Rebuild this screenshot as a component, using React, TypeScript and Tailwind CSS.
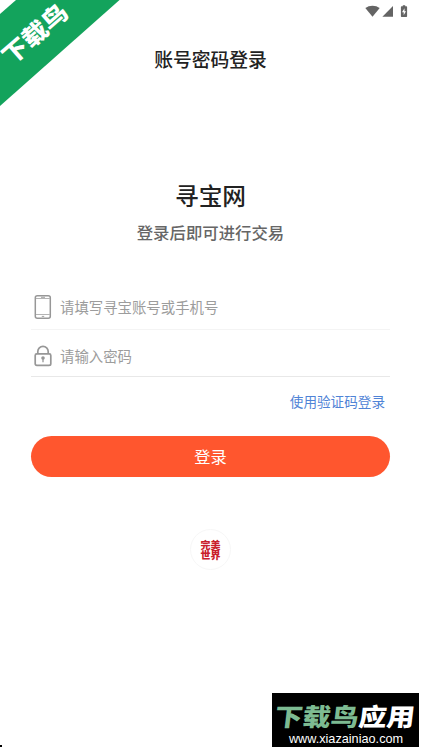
import {useState} from "react"

const PhoneIcon = () => (
  <svg width="18" height="26" viewBox="0 0 18 26" fill="none" stroke="#979797">
    <rect x="1.3" y="1.8" width="15" height="22.4" rx="2" strokeWidth="1.5" />
    <path d="M2 4.5h14M2 20.5h14" stroke="#b4b4b4" strokeWidth="1" />
    <path d="M7 3.3h4M7.8 22.4h2.4" strokeWidth="0.9" />
  </svg>
)

const LockIcon = () => (
  <svg width="18" height="22" viewBox="0 0 18 22" fill="none" stroke="#979797">
    <rect x="1.2" y="8.8" width="15.6" height="11.6" rx="1.6" strokeWidth="1.7" />
    <path d="M3.8 8.8V6.6a5.2 5.2 0 0 1 10.4 0v2.2" strokeWidth="1.7" />
    <circle cx="9" cy="13" r="1.8" fill="#979797" stroke="none" />
    <path d="M9 13v4.3" strokeWidth="1.3" />
  </svg>
)

const StatusIcons = () => (
  <div className="flex h-[22px] justify-end pr-[13px] pt-[5px]">
    <svg width="43" height="13" viewBox="0 0 43 13" fill="#646464">
      <path d="M0.3 3.1C4.2-0.2 10.8-0.2 14.7 3.1L7.5 11.8z" />
      <path d="M28 1v10.8H17.4z" />
      <path d="M36.6 1.2h1.2V0.3h2.4v0.9h1.2c.4 0 .7.3.7.7v9.3c0 .4-.3.7-.7.7h-4.8a.7.7 0 0 1-.7-.7V1.9c0-.4.3-.7.7-.7z" />
      <path d="M39.5 3.3L37 7.2h1.7v3L41 6.3h-1.5z" fill="#fff" />
    </svg>
  </div>
)

// green ribbon over the top left corner
const Ribbon = () => (
  <div className="absolute left-0 top-0 h-[107px] w-[120px]">
    <svg className="absolute left-0 top-0" width="120" height="107">
      <path d="M16 0H119.5L0 106V14z" fill="#13a35c" />
    </svg>
    <span className="absolute left-[-5px] top-[19px] w-[78px] -rotate-[41deg] scale-y-90 text-center text-[26px] leading-[28px] font-black text-white whitespace-nowrap">
      下载鸟
    </span>
  </div>
)

const Watermark = () => (
  <div className="absolute left-[272px] top-[693px] flex h-[54px] w-[147px] flex-col items-center bg-black text-white">
    <div className="mt-[7px] -skew-x-6 scale-y-88 text-[28px] leading-[30px] font-black whitespace-nowrap">
      <span className="text-[#7dbb92]">下载鸟</span>
      <span>应用</span>
    </div>
    <div className="mt-px pl-px font-['Liberation_Sans',sans-serif] text-[12.7px] leading-[16px]">
      www.xiazainiao.com
    </div>
  </div>
)

const App = () => {
  const [account, setAccount] = useState("")
  const [password, setPassword] = useState("")

  return (
    <div className="relative h-[748px] w-[421px] overflow-hidden bg-white font-['Noto_Sans_CJK_SC',sans-serif]">
      <StatusIcons />
      <h1 className="mt-[23px] text-center text-[18.8px] leading-[28px] font-medium text-[#222]">
        账号密码登录
      </h1>
      <h2 className="mt-[104px] text-center text-[23.7px] leading-[36px] font-medium text-[#222]">
        寻宝网
      </h2>
      <p className="mt-[7px] text-center text-[16.4px] leading-[24px] font-medium text-[#666]">
        登录后即可进行交易
      </p>

      <form className="mx-[31px] mt-[41px] flex flex-col">
        <label className="flex h-[45px] items-center gap-[8px] border-b border-[#f4f4f4] pl-[3px]">
          <PhoneIcon />
          <input
            className="w-[300px] text-[14.4px] leading-[22px] outline-none placeholder:text-[#9c9c9c]"
            placeholder="请填写寻宝账号或手机号"
            value={account}
            onChange={(e) => setAccount(e.target.value)}
          />
        </label>
        <label className="flex h-[47px] items-center gap-[8px] border-b border-[#e8e8e8] pl-[3px] pt-[5px]">
          <LockIcon />
          <input
            type="password"
            className="w-[300px] text-[14.4px] leading-[22px] outline-none placeholder:text-[#9c9c9c]"
            placeholder="请输入密码"
            value={password}
            onChange={(e) => setPassword(e.target.value)}
          />
        </label>
        <a className="mt-[13px] mr-[5px] self-end text-[13.6px] leading-[22px] text-[#4f83d6]">
          使用验证码登录
        </a>
        <button
          type="button"
          className="mt-[24px] h-[41px] rounded-full bg-[#ff562e] pb-[2px] text-[16.3px] leading-[24px] text-white"
        >
          登录
        </button>
      </form>

      <div className="mx-auto mt-[52px] flex size-[41px] items-center justify-center rounded-full border border-[#f7f7f7]">
        <p className="w-[20px] break-all text-[10px] leading-[10px] font-black text-[#c9202b]">
          完美世界
        </p>
      </div>

      <Ribbon />
      <Watermark />
      <div className="absolute left-0 top-[745px] size-[2px] bg-black" />
    </div>
  )
}

export default App
